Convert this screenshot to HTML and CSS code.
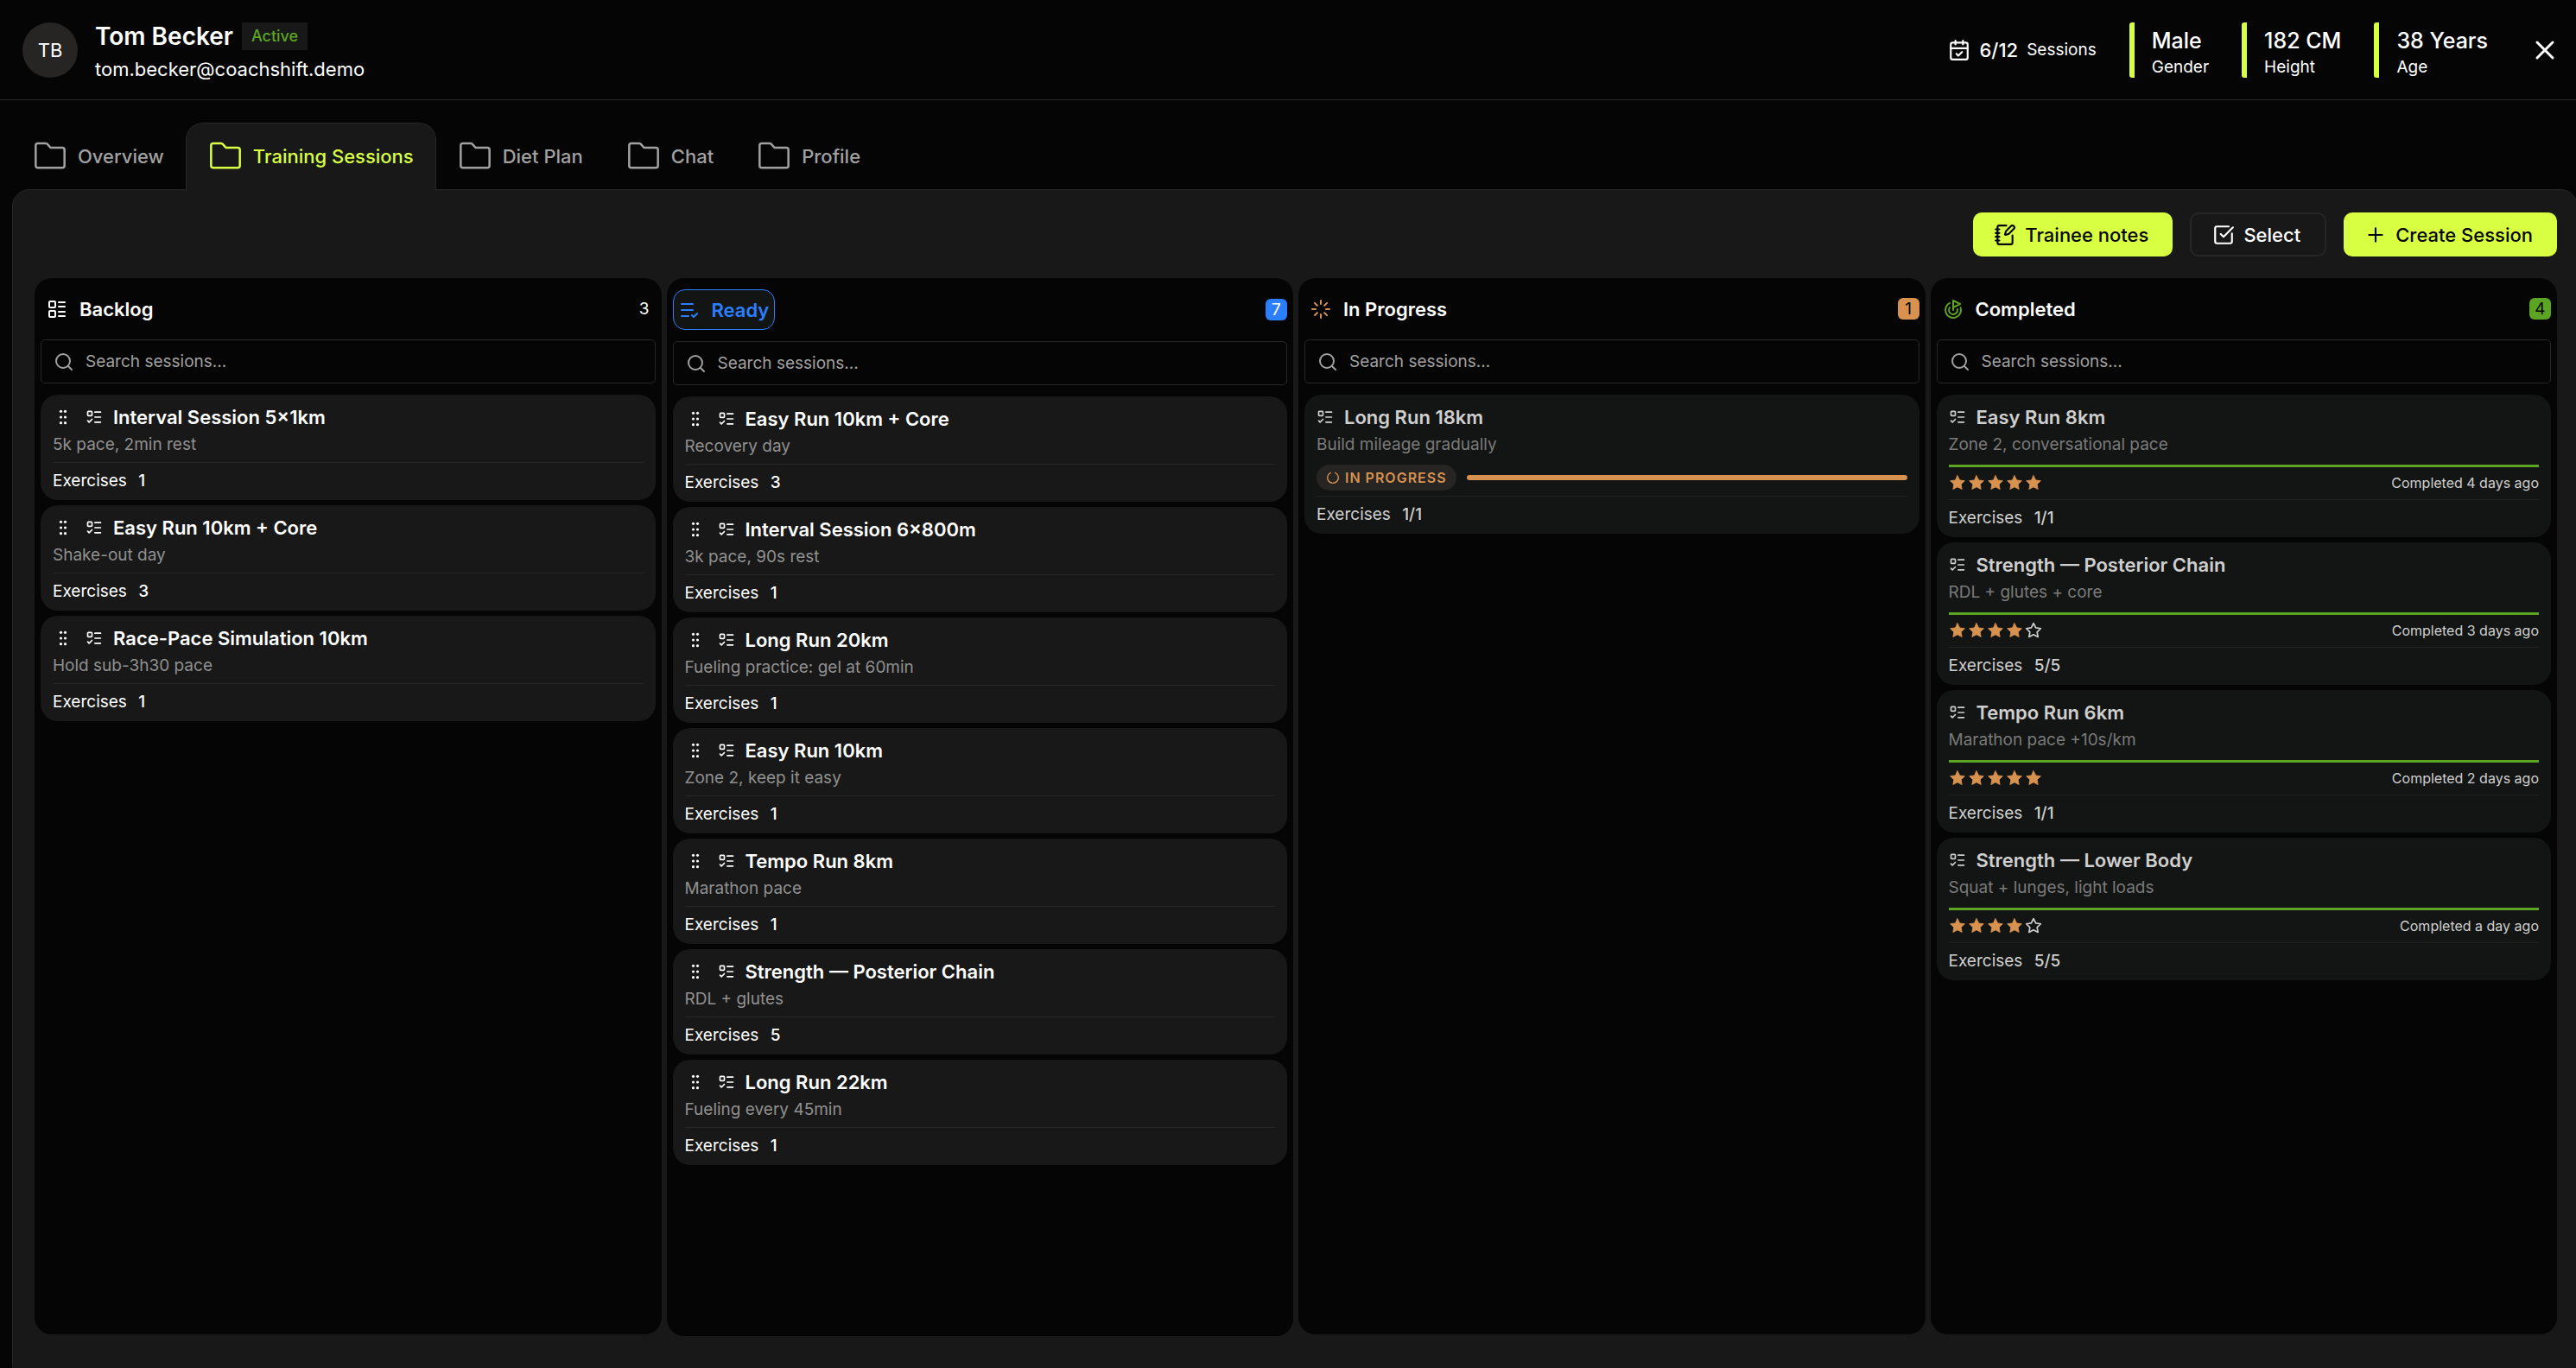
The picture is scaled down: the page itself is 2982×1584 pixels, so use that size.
FILE: index.html
```html
<!DOCTYPE html>
<html lang="en">
<head>
    <meta charset="UTF-8">
    <meta name="viewport" content="width=device-width, initial-scale=1.0">
    <title>Tom Becker - Training Sessions</title>
    <link rel="stylesheet" href="styles.css">
</head>
<body>

<!-- Icon set -->
<svg class="sprite" aria-hidden="true">
    <symbol id="i-folder" viewBox="0 0 24 24"><path d="M20.5 20a1.5 1.5 0 0 0 1.5-1.5V7.5a1.5 1.5 0 0 0-1.5-1.5H12.3L10.4 3.8A2 2 0 0 0 8.900 3H3.500A1.500 1.500 0 0 0 2 4.500v14A1.500 1.500 0 0 0 3.500 20Z"/></symbol>
    <symbol id="i-calendar" viewBox="0 0 24 24"><path d="M8 2v4M16 2v4M3 10h18M9 16l2 2 4-4"/><rect x="3" y="4" width="18" height="18" rx="2"/></symbol>
    <symbol id="i-close" viewBox="0 0 24 24"><path d="M18 6 6 18M6 6l12 12"/></symbol>
    <symbol id="i-notes" viewBox="0 0 24 24"><path d="M13.400 2H6a2 2 0 0 0-2 2v16a2 2 0 0 0 2 2h12a2 2 0 0 0 2-2v-7.400M2 6h4M2 10h4M2 14h4M2 18h4"/><path d="M21.378 5.626a1 1 0 1 0-3.004-3.004l-5.010 5.012a2 2 0 0 0-.506.854l-.837 2.870a.5.5 0 0 0 .620.620l2.870-.837a2 2 0 0 0 .854-.506z"/></symbol>
    <symbol id="i-select" viewBox="0 0 24 24"><path d="M21 10.500V19a2 2 0 0 1-2 2H5a2 2 0 0 1-2-2V5a2 2 0 0 1 2-2h12.500M9 11l3 3L22 4"/></symbol>
    <symbol id="i-plus" viewBox="0 0 24 24"><path d="M5 12h14M12 5v14"/></symbol>
    <symbol id="i-backlog" viewBox="0 0 24 24"><rect x="3" y="3" width="7" height="7" rx="1"/><rect x="3" y="14" width="7" height="7" rx="1"/><path d="M14 4h7M14 9h7M14 15h7M14 20h7"/></symbol>
    <symbol id="i-ready" viewBox="0 0 24 24"><path d="M16 5H3M16 12H3M11 19H3M15 18l2 2 4-4"/></symbol>
    <symbol id="i-progress" viewBox="0 0 24 24"><path d="M12 2v4M16.200 7.800l2.900-2.900M18 12h4M16.200 16.200l2.900 2.900M12 18v4M4.900 19.100l2.900-2.900M2 12h4M4.900 4.900l2.900 2.900"/></symbol>
    <symbol id="i-goal" viewBox="0 0 24 24"><path d="M12 13V2l8 4-8 4"/><path d="M20.561 10.222a9 9 0 1 1-12.550-5.290"/><path d="M8.002 9.997a5 5 0 1 0 8.900 2.020"/></symbol>
    <symbol id="i-search" viewBox="0 0 24 24"><circle cx="11" cy="11" r="8"/><path d="m21 21-4.300-4.300"/></symbol>
    <symbol id="i-grip" viewBox="0 0 24 24"><circle cx="9" cy="4" r="1.900"/><circle cx="15" cy="4" r="1.900"/><circle cx="9" cy="12" r="1.900"/><circle cx="15" cy="12" r="1.900"/><circle cx="9" cy="20" r="1.900"/><circle cx="15" cy="20" r="1.900"/></symbol>
    <symbol id="i-todo" viewBox="0 0 24 24"><rect x="3" y="4" width="6" height="6" rx="1"/><path d="m3 17 2 2 4-4M13 5h8M13 12h8M13 19h8"/></symbol>
    <symbol id="i-spin" viewBox="0 0 24 24"><path d="M16 3.500a9.500 9.500 0 1 1-8 0"/></symbol>
    <symbol id="i-star" viewBox="0 0 24 24"><path d="m12 2 3.100 6.300 6.900 1-5 4.900 1.200 6.800-6.200-3.200L5.800 21 7 14.200 2 9.300l6.900-1z"/></symbol>
</svg>

<div class="page">
    <header class="header">
        <div class="avatar">TB</div>
        <div class="person">
            <div class="person-top">
                <h1>Tom Becker</h1>
                <span class="status">Active</span>
            </div>
            <p class="email">tom.becker@coachshift.demo</p>
        </div>
        <div class="sessions-left">
            <svg class="icon"><use href="#i-calendar"/></svg>
            <strong>6/12</strong>
            <span>Sessions</span>
        </div>
        <dl class="facts">
            <div class="fact"><dd>Male</dd><dt>Gender</dt></div>
            <div class="fact"><dd>182 CM</dd><dt>Height</dt></div>
            <div class="fact"><dd>38 Years</dd><dt>Age</dt></div>
        </dl>
        <button type="button" class="close" aria-label="Close"><svg class="icon"><use href="#i-close"/></svg></button>
    </header>

    <nav class="tabs">
        <a href="#" class="tab"><svg class="icon"><use href="#i-folder"/></svg>Overview</a>
        <a href="#" class="tab active"><svg class="icon"><use href="#i-folder"/></svg>Training Sessions</a>
        <a href="#" class="tab"><svg class="icon"><use href="#i-folder"/></svg>Diet Plan</a>
        <a href="#" class="tab"><svg class="icon"><use href="#i-folder"/></svg>Chat</a>
        <a href="#" class="tab"><svg class="icon"><use href="#i-folder"/></svg>Profile</a>
    </nav>

    <main class="panel">
        <div class="toolbar">
            <button type="button" class="btn btn-primary"><svg class="icon"><use href="#i-notes"/></svg>Trainee notes</button>
            <button type="button" class="btn btn-outline"><svg class="icon"><use href="#i-select"/></svg>Select</button>
            <button type="button" class="btn btn-primary"><svg class="icon"><use href="#i-plus"/></svg>Create Session</button>
        </div>

        <div class="board">
            <!-- Backlog -->
            <section class="column">
                <div class="column-head">
                    <h2 class="column-title"><svg class="icon"><use href="#i-backlog"/></svg>Backlog</h2>
                    <span class="count">3</span>
                </div>
                <label class="search"><svg class="icon"><use href="#i-search"/></svg><input type="text" placeholder="Search sessions..." aria-label="Search backlog"></label>
                <div class="cards">
                    <article class="card">
                        <h3><svg class="icon grip"><use href="#i-grip"/></svg><svg class="icon"><use href="#i-todo"/></svg>Interval Session 5×1km</h3>
                        <p class="note">5k pace, 2min rest</p>
                        <p class="exercises">Exercises <b>1</b></p>
                    </article>
                    <article class="card">
                        <h3><svg class="icon grip"><use href="#i-grip"/></svg><svg class="icon"><use href="#i-todo"/></svg>Easy Run 10km + Core</h3>
                        <p class="note">Shake-out day</p>
                        <p class="exercises">Exercises <b>3</b></p>
                    </article>
                    <article class="card">
                        <h3><svg class="icon grip"><use href="#i-grip"/></svg><svg class="icon"><use href="#i-todo"/></svg>Race-Pace Simulation 10km</h3>
                        <p class="note">Hold sub-3h30 pace</p>
                        <p class="exercises">Exercises <b>1</b></p>
                    </article>
                </div>
            </section>

            <!-- Ready -->
            <section class="column ready">
                <div class="column-head">
                    <h2 class="column-title"><svg class="icon"><use href="#i-ready"/></svg>Ready</h2>
                    <span class="count">7</span>
                </div>
                <label class="search"><svg class="icon"><use href="#i-search"/></svg><input type="text" placeholder="Search sessions..." aria-label="Search ready"></label>
                <div class="cards">
                    <article class="card">
                        <h3><svg class="icon grip"><use href="#i-grip"/></svg><svg class="icon"><use href="#i-todo"/></svg>Easy Run 10km + Core</h3>
                        <p class="note">Recovery day</p>
                        <p class="exercises">Exercises <b>3</b></p>
                    </article>
                    <article class="card">
                        <h3><svg class="icon grip"><use href="#i-grip"/></svg><svg class="icon"><use href="#i-todo"/></svg>Interval Session 6×800m</h3>
                        <p class="note">3k pace, 90s rest</p>
                        <p class="exercises">Exercises <b>1</b></p>
                    </article>
                    <article class="card">
                        <h3><svg class="icon grip"><use href="#i-grip"/></svg><svg class="icon"><use href="#i-todo"/></svg>Long Run 20km</h3>
                        <p class="note">Fueling practice: gel at 60min</p>
                        <p class="exercises">Exercises <b>1</b></p>
                    </article>
                    <article class="card">
                        <h3><svg class="icon grip"><use href="#i-grip"/></svg><svg class="icon"><use href="#i-todo"/></svg>Easy Run 10km</h3>
                        <p class="note">Zone 2, keep it easy</p>
                        <p class="exercises">Exercises <b>1</b></p>
                    </article>
                    <article class="card">
                        <h3><svg class="icon grip"><use href="#i-grip"/></svg><svg class="icon"><use href="#i-todo"/></svg>Tempo Run 8km</h3>
                        <p class="note">Marathon pace</p>
                        <p class="exercises">Exercises <b>1</b></p>
                    </article>
                    <article class="card">
                        <h3><svg class="icon grip"><use href="#i-grip"/></svg><svg class="icon"><use href="#i-todo"/></svg>Strength — Posterior Chain</h3>
                        <p class="note">RDL + glutes</p>
                        <p class="exercises">Exercises <b>5</b></p>
                    </article>
                    <article class="card">
                        <h3><svg class="icon grip"><use href="#i-grip"/></svg><svg class="icon"><use href="#i-todo"/></svg>Long Run 22km</h3>
                        <p class="note">Fueling every 45min</p>
                        <p class="exercises">Exercises <b>1</b></p>
                    </article>
                </div>
            </section>

            <!-- In Progress -->
            <section class="column progress">
                <div class="column-head">
                    <h2 class="column-title"><svg class="icon"><use href="#i-progress"/></svg>In Progress</h2>
                    <span class="count">1</span>
                </div>
                <label class="search"><svg class="icon"><use href="#i-search"/></svg><input type="text" placeholder="Search sessions..." aria-label="Search in progress"></label>
                <div class="cards">
                    <article class="card locked">
                        <h3><svg class="icon"><use href="#i-todo"/></svg>Long Run 18km</h3>
                        <p class="note">Build mileage gradually</p>
                        <div class="running">
                            <span class="pill"><svg class="icon"><use href="#i-spin"/></svg>IN PROGRESS</span>
                            <span class="running-bar"></span>
                        </div>
                        <p class="exercises">Exercises <b>1/1</b></p>
                    </article>
                </div>
            </section>

            <!-- Completed -->
            <section class="column completed">
                <div class="column-head">
                    <h2 class="column-title"><svg class="icon"><use href="#i-goal"/></svg>Completed</h2>
                    <span class="count">4</span>
                </div>
                <label class="search"><svg class="icon"><use href="#i-search"/></svg><input type="text" placeholder="Search sessions..." aria-label="Search completed"></label>
                <div class="cards">
                    <article class="card locked">
                        <h3><svg class="icon"><use href="#i-todo"/></svg>Easy Run 8km</h3>
                        <p class="note">Zone 2, conversational pace</p>
                        <div class="result">
                            <span class="stars"><svg class="icon"><use href="#i-star"/></svg><svg class="icon"><use href="#i-star"/></svg><svg class="icon"><use href="#i-star"/></svg><svg class="icon"><use href="#i-star"/></svg><svg class="icon"><use href="#i-star"/></svg></span>
                            <span class="when">Completed 4 days ago</span>
                        </div>
                        <p class="exercises">Exercises <b>1/1</b></p>
                    </article>
                    <article class="card locked">
                        <h3><svg class="icon"><use href="#i-todo"/></svg>Strength — Posterior Chain</h3>
                        <p class="note">RDL + glutes + core</p>
                        <div class="result">
                            <span class="stars"><svg class="icon"><use href="#i-star"/></svg><svg class="icon"><use href="#i-star"/></svg><svg class="icon"><use href="#i-star"/></svg><svg class="icon"><use href="#i-star"/></svg><svg class="icon empty"><use href="#i-star"/></svg></span>
                            <span class="when">Completed 3 days ago</span>
                        </div>
                        <p class="exercises">Exercises <b>5/5</b></p>
                    </article>
                    <article class="card locked">
                        <h3><svg class="icon"><use href="#i-todo"/></svg>Tempo Run 6km</h3>
                        <p class="note">Marathon pace +10s/km</p>
                        <div class="result">
                            <span class="stars"><svg class="icon"><use href="#i-star"/></svg><svg class="icon"><use href="#i-star"/></svg><svg class="icon"><use href="#i-star"/></svg><svg class="icon"><use href="#i-star"/></svg><svg class="icon"><use href="#i-star"/></svg></span>
                            <span class="when">Completed 2 days ago</span>
                        </div>
                        <p class="exercises">Exercises <b>1/1</b></p>
                    </article>
                    <article class="card locked">
                        <h3><svg class="icon"><use href="#i-todo"/></svg>Strength — Lower Body</h3>
                        <p class="note">Squat + lunges, light loads</p>
                        <div class="result">
                            <span class="stars"><svg class="icon"><use href="#i-star"/></svg><svg class="icon"><use href="#i-star"/></svg><svg class="icon"><use href="#i-star"/></svg><svg class="icon"><use href="#i-star"/></svg><svg class="icon empty"><use href="#i-star"/></svg></span>
                            <span class="when">Completed a day ago</span>
                        </div>
                        <p class="exercises">Exercises <b>5/5</b></p>
                    </article>
                </div>
            </section>
        </div>
    </main>
</div>

</body>
</html>
```
FILE: styles.css
```css
* {
    margin: 0;
    padding: 0;
    box-sizing: border-box;
}
body {
    font-family: Inter, "Liberation Sans", sans-serif;
    font-size: 19px;
    line-height: 28px;
    color: #fff;
    background-color: #050505;
    height: 100vh;
    overflow: hidden;
}
button, input {
    font: inherit;
    color: inherit;
}
.sprite {
    display: none;
}
.icon {
    flex: none;
    width: 24px;
    height: 24px;
    fill: none;
    stroke: currentColor;
    stroke-width: 2;
    stroke-linecap: round;
    stroke-linejoin: round;
}
.page {
    display: flex;
    flex-direction: column;
    height: calc(100vh + 16px);
}

/* Header */
.header {
    display: flex;
    align-items: center;
    height: 116px;
    padding: 0 18px 0 26px;
    border-bottom: 1px solid #262626;
}
.avatar {
    display: flex;
    align-items: center;
    justify-content: center;
    width: 64px;
    height: 64px;
    border-radius: 50%;
    background-color: #262524;
    font-size: 22px;
}
.person {
    flex: 1;
    margin-left: 20px;
    padding-top: 6px;
}
.person-top {
    display: flex;
    align-items: center;
    gap: 10px;
}
h1 {
    font-size: 28px;
    font-weight: 600;
    line-height: 32px;
}
.status {
    padding: 0 11px;
    background-color: #181818;
    color: #5ca524;
    font-size: 18px;
    font-weight: 500;
    line-height: 32px;
}
.email {
    font-size: 22px;
    line-height: 32px;
    margin-top: 6px;
}
.sessions-left {
    display: flex;
    align-items: center;
    gap: 10px;
    margin-right: 38px;
}
.sessions-left .icon {
    width: 26px;
    height: 26px;
}
.sessions-left strong {
    font-size: 22px;
    font-weight: 500;
}
.facts {
    display: flex;
    gap: 38px;
}
.fact {
    display: flex;
    flex-direction: column;
    justify-content: center;
    height: 64px;
    padding: 4px 0 0 26px;
    background: linear-gradient(#d9ff43, #d9ff43) left / 6px 100% no-repeat;
    border-radius: 3px;
}
.fact dd {
    font-size: 25px;
    font-weight: 500;
    line-height: 36px;
}
.fact dt {
    line-height: 26px;
}
.close {
    display: flex;
    margin-left: 48px;
    background: none;
    border: none;
    cursor: pointer;
}
.close .icon {
    width: 36px;
    height: 36px;
}

/* Tabs */
.tabs {
    display: flex;
    padding: 26px 13px 0;
}
.tab {
    display: flex;
    align-items: center;
    gap: 12px;
    height: 78px;
    padding: 0 25px;
    color: #a1a1a1;
    font-size: 22px;
    font-weight: 500;
    text-decoration: none;
}
.tab .icon {
    width: 40px;
    height: 40px;
    stroke-width: 1.5;
}
.tab.active {
    position: relative;
    margin-bottom: -1px;
    height: 79px;
    padding: 0 25px 2px;
    color: #d9ff43;
    background-color: #181818;
    border: 1px solid #262626;
    border-bottom: none;
    border-radius: 20px 20px 0 0;
}

/* Panel */
.panel {
    flex: 1;
    display: flex;
    flex-direction: column;
    margin: -1px -2px 0 14px;
    padding: 26px 23px 54px 25px;
    background-color: #181818;
    border: 1px solid #262626;
    border-radius: 20px;
}
.toolbar {
    display: flex;
    justify-content: flex-end;
    gap: 20px;
    margin-bottom: 25px;
}
.btn {
    display: flex;
    align-items: center;
    gap: 10px;
    height: 51px;
    padding: 0 28px 0 24px;
    border: none;
    border-radius: 10px;
    font-size: 22px;
    font-weight: 500;
    cursor: pointer;
}
.btn .icon {
    width: 26px;
    height: 26px;
}
.btn-primary {
    color: #050505;
    background-color: #d9ff43;
}
.btn-outline {
    background: none;
    border: 2px solid #262626;
}

/* Board */
.board {
    flex: 1;
    display: grid;
    grid-template-columns: repeat(4, 1fr);
    gap: 6px;
}
.column {
    padding: 13px 7px;
    background-color: #050505;
    border-radius: 20px;
}
.column-head {
    display: flex;
    align-items: center;
    justify-content: space-between;
    margin-bottom: 13px;
}
.column-title {
    display: flex;
    align-items: center;
    gap: 14px;
    height: 45px;
    padding: 0 7px;
    font-size: 22px;
    font-weight: 600;
}
.count {
    margin-right: 7px;
}
.ready .count, .progress .count, .completed .count {
    width: 25px;
    height: 25px;
    margin-right: 0;
    border-radius: 6px;
    line-height: 25px;
    text-align: center;
}
.ready {
    margin-bottom: -2px;
}
.ready .count {
    background-color: #2b7fff;
}
.ready .column-title {
    height: 47px;
    padding: 0 6px;
    color: #2b7fff;
    background-color: #121514;
    border: 1px solid #2b7fff;
    border-radius: 14px;
}
.progress .count {
    color: #050505;
    background-color: #d8924f;
}
.progress .column-title .icon {
    color: #d8924f;
}
.completed .count {
    color: #050505;
    background-color: #5ca524;
}
.completed .column-title .icon {
    color: #5ca524;
}
.search {
    display: flex;
    align-items: center;
    gap: 13px;
    height: 51px;
    padding: 0 14px;
    border: 1px solid #262626;
    border-radius: 5px;
    color: #a1a1a1;
}
.search input {
    flex: 1;
    background: none;
    border: none;
    outline: none;
}
.search input::placeholder {
    color: #a1a1a1;
}
.cards {
    display: flex;
    flex-direction: column;
    gap: 6px;
    margin-top: 13px;
}

/* Cards */
.card {
    padding: 10px 14px 6px;
    background-color: #181818;
    border-radius: 20px;
}
.card h3 {
    display: flex;
    align-items: center;
    gap: 12px;
    font-size: 22px;
    font-weight: 600;
    line-height: 32px;
}
.card h3 .icon {
    width: 20px;
    height: 20px;
}
.card h3 .grip {
    margin: 0 4px 0 2px;
    fill: currentColor;
    stroke: none;
}
.note {
    color: #909090;
    padding: 2px 0 6px;
}
.exercises {
    border-top: 1px solid #262626;
    padding-top: 5px;
    line-height: 32px;
}
.exercises b {
    margin-left: 8px;
    font-weight: 500;
}
.locked {
    background-color: #131514;
    color: #cfcfcf;
}
.locked .note {
    color: #7a7a7a;
}
.locked .exercises {
    border-color: #202221;
}
.running {
    display: flex;
    align-items: center;
    gap: 12px;
    padding: 3px 0 6px;
}
.pill {
    display: flex;
    align-items: center;
    gap: 6px;
    padding: 0 11px;
    border-radius: 15px;
    background-color: #262524;
    color: #d8924f;
    font-size: 16px;
    font-weight: 600;
    line-height: 30px;
    letter-spacing: 1px;
}
.pill .icon {
    width: 16px;
    height: 16px;
}
.running-bar {
    flex: 1;
    height: 6px;
    border-radius: 3px;
    background-color: #d8924f;
}
.result {
    display: flex;
    align-items: center;
    justify-content: space-between;
    margin-top: 3px;
    padding: 4px 0 5px;
    border-top: 3px solid #5ca524;
}
.stars {
    display: flex;
    gap: 2px;
    color: #d8924f;
}
.stars .icon {
    width: 20px;
    height: 20px;
    fill: currentColor;
    stroke-width: 1;
}
.stars .empty {
    fill: none;
    color: #cfcfcf;
    stroke-width: 2;
}
.when {
    font-size: 16px;
}
```
